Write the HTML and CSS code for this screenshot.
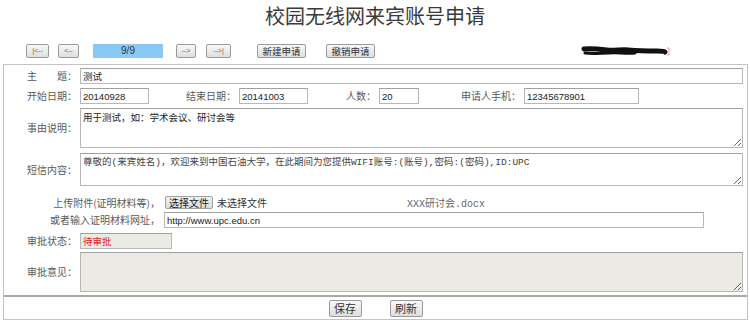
FILE: index.html
```html
<!DOCTYPE html>
<html lang="zh-CN">

<head>
    <meta charset="UTF-8">
    <title>校园无线网来宾账号申请</title>
    <link rel="stylesheet" href="styles.css">
</head>

<body>
    <h1 class="title">校园无线网来宾账号申请</h1>

    <div class="toolbar">
        <button type="button" class="btn nav nav-first">|&lt;--</button>
        <button type="button" class="btn nav nav-prev">&lt;--</button>
        <div class="pager">9/9</div>
        <button type="button" class="btn nav nav-next">--&gt;</button>
        <button type="button" class="btn nav nav-last">--&gt;|</button>
        <button type="button" class="btn action action-new">新建申请</button>
        <button type="button" class="btn action action-cancel">撤销申请</button>
        <svg class="user-mark" width="92" height="12" viewBox="0 0 92 12">
            <path d="M3 4 C10 3 18 4 26 5 C34 6 40 4 48 5 C58 6 68 6 76 6 C80 6 83 6 84 7" stroke="#111" stroke-width="5" fill="none" stroke-linecap="round"/>
            <path d="M4 8 C12 9 20 8 28 8 C36 7 44 9 54 8" stroke="#111" stroke-width="3" fill="none" stroke-linecap="round"/>
            <path d="M86 3 L88 3 L88 10 L86 10" stroke="#e88" stroke-width="0.8" fill="none"/>
        </svg>
    </div>

    <div class="panel">
        <div class="fields">
            <div class="row row-subject">
                <span class="lbl">主　　题：</span>
                <input class="field field-full" type="text" value="测试">
            </div>

            <div class="row row-dates">
                <span class="lbl">开始日期：</span>
                <input class="field field-date" type="text" value="20140928">
                <span class="lbl lbl-end">结束日期：</span>
                <input class="field field-date" type="text" value="20141003">
                <span class="lbl lbl-count">人数：</span>
                <input class="field field-count" type="text" value="20">
                <span class="lbl lbl-phone">申请人手机：</span>
                <input class="field field-phone" type="text" value="12345678901">
            </div>

            <div class="row row-reason">
                <span class="lbl">事由说明：</span>
                <textarea class="field area area-reason">用于测试，如：学术会议、研讨会等</textarea>
            </div>

            <div class="row row-sms">
                <span class="lbl">短信内容：</span>
                <textarea class="field area area-sms">尊敬的(来宾姓名)，欢迎来到中国石油大学，在此期间为您提供WIFI账号:(账号),密码:(密码),ID:UPC</textarea>
            </div>

            <div class="row row-upload">
                <span class="lbl lbl-wide">上传附件(证明材料等)，</span>
                <span class="file-btn">选择文件</span>
                <span class="file-none">未选择文件</span>
                <span class="file-name">XXX研讨会.docx</span>
            </div>

            <div class="row row-url">
                <span class="lbl lbl-wide">或者输入证明材料网址，</span>
                <input class="field field-url" type="text" value="http://www.upc.edu.cn">
            </div>

            <div class="row row-status">
                <span class="lbl">审批状态：</span>
                <input class="field field-status" type="text" value="待审批" disabled>
            </div>

            <div class="row row-opinion">
                <span class="lbl">审批意见：</span>
                <textarea class="field area area-opinion" disabled></textarea>
            </div>
        </div>

        <div class="footer">
            <button type="button" class="btn foot-btn">保存</button>
            <button type="button" class="btn foot-btn">刷新</button>
        </div>
    </div>
</body>

</html>
```

FILE: styles.css
```css
body {
    margin: 0;
    padding: 0;
    background-color: #ffffff;
    color: #555;
    font-family: "Noto Sans CJK SC", "Liberation Sans", sans-serif;
}

.title {
    margin: 4px 0 0 0;
    height: 24px;
    line-height: 24px;
    font-size: 20px;
    font-weight: normal;
    color: #3a3a3a;
    text-align: center;
}

/* toolbar */
.toolbar {
    display: flex;
    align-items: center;
    height: 14px;
    margin-top: 16px;
    padding-left: 26px;
}

.btn {
    box-sizing: border-box;
    padding: 0;
    border: 1px solid #9a9a9a;
    border-radius: 2px;
    background: linear-gradient(#f8f8f8, #dedede);
    color: #444;
    font-family: "Noto Sans CJK SC", "Liberation Sans", sans-serif;
    cursor: pointer;
}

.nav {
    height: 14px;
    font-size: 7px;
    line-height: 12px;
    font-family: "Liberation Sans", sans-serif;
    color: #666;
}

.nav-first { width: 23px; }
.nav-prev { width: 21px; margin-left: 9px; }
.nav-next { width: 20px; margin-left: 13px; }
.nav-last { width: 25px; margin-left: 10px; }

.pager {
    width: 70px;
    height: 14px;
    margin-left: 14px;
    background-color: #8ac8f6;
    color: #333;
    font-family: "Liberation Sans", sans-serif;
    font-size: 10px;
    line-height: 14px;
    text-align: center;
}

.action {
    width: 49px;
    height: 14px;
    font-size: 9.5px;
    line-height: 12px;
    color: #333;
}

.action-new { margin-left: 26px; }
.action-cancel { margin-left: 20px; }

.user-mark {
    margin-left: 206px;
}

/* form panel */
.panel {
    width: 743px;
    margin: 6px 0 0 3px;
    border: 1px solid #c4c4c4;
}

.fields {
    display: flex;
    flex-direction: column;
    padding-bottom: 3px;
}

.row {
    display: flex;
    align-items: center;
}

.lbl {
    flex: none;
    width: 73px;
    margin-right: 3px;
    font-size: 10px;
    line-height: 14px;
    text-align: right;
    white-space: nowrap;
    color: #5a5a5a;
}

.lbl-end { width: 87px; }
.lbl-count { width: 68px; }
.lbl-phone { width: 102px; }
.lbl-wide { width: 156px; margin-right: 4px; }

.field {
    box-sizing: border-box;
    margin: 0;
    padding: 0 2px;
    border: 1px solid #b8b8b8;
    border-top-color: #a0a0a0;
    background-color: #ffffff;
    color: #222;
    font-family: "Liberation Sans", "Noto Sans CJK SC", sans-serif;
    font-size: 9.5px;
    outline: none;
}

input.field {
    height: 16px;
}

.field-full { width: 663px; }
.field-date { width: 69px; }
.field-count { width: 40px; }
.field-phone { width: 115px; }
.field-url { width: 540px; height: 15px; }

.field-status {
    width: 92px;
    height: 15px;
    background-color: #ebebe4;
    color: #e02020;
    font-family: "Noto Sans CJK SC", sans-serif;
}

.area {
    width: 663px;
    padding: 2px 2px;
    resize: both;
    font-family: "Liberation Mono", "Noto Sans CJK SC", monospace;
    font-size: 9.5px;
    line-height: 13px;
}

.row-subject { margin-top: 3px; }
.row-dates { margin-top: 4px; }
.row-reason { margin-top: 4px; }
.row-sms { margin-top: 5px; }
.row-upload { margin-top: 10px; height: 13px; }
.row-url { margin-top: 3px; }
.row-status { margin-top: 5px; }
.row-opinion { margin-top: 3px; }

.area-reason {
    height: 40px;
    font-family: "Noto Sans CJK SC", sans-serif;
}

.area-sms {
    height: 33px;
    color: #444;
}

.area-opinion {
    height: 40px;
    background-color: #ebebe4;
}

.file-btn {
    box-sizing: border-box;
    height: 13px;
    width: 48px;
    margin-left: 1px;
    border: 1px solid #a0a0a0;
    border-radius: 2px;
    background: linear-gradient(#f0f0f0, #dcdcdc);
    color: #222;
    font-size: 10px;
    line-height: 11px;
    text-align: center;
}

.file-none {
    margin-left: 4px;
    font-size: 10px;
    color: #333;
}

.file-name {
    margin-left: 140px;
    font-family: "Liberation Mono", "Noto Sans CJK SC", monospace;
    font-size: 10px;
    color: #666;
}

.footer {
    display: flex;
    justify-content: center;
    align-items: center;
    gap: 28px;
    height: 22px;
    border-top: 2px solid #a8a8a8;
}

.foot-btn {
    width: 33px;
    height: 17px;
    font-size: 11px;
    line-height: 15px;
    color: #333;
}
```
